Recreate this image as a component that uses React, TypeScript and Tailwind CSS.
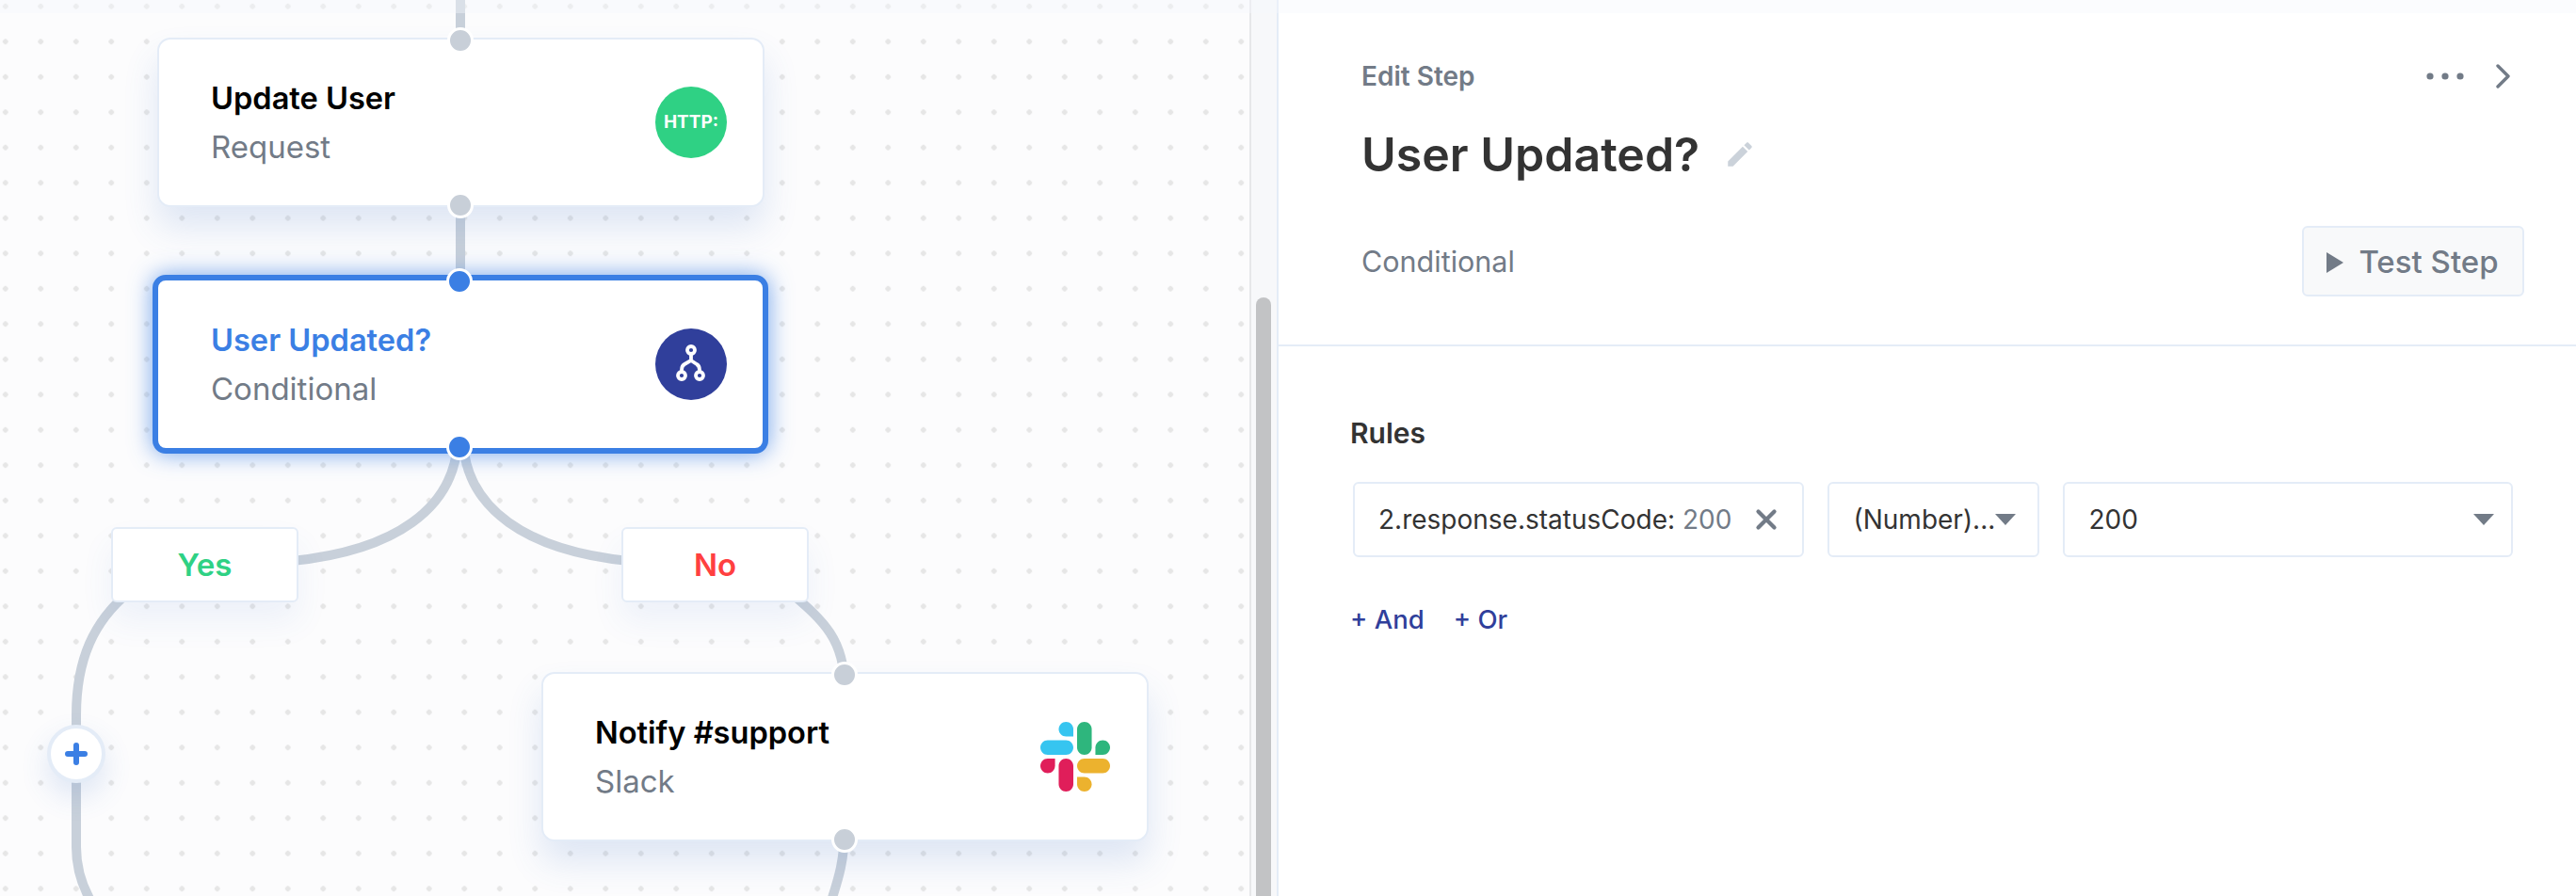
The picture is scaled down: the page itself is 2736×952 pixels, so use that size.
import { X } from "lucide-react";

const sans = "font-['Inter',sans-serif]";

function Port({ className, active }: { className: string; active?: boolean }) {
  return (
    <span
      className={`absolute z-10 ml-[-1px] h-[28px] w-[28px] rounded-full border-[3px] border-white ${
        active ? "bg-[#3b7fe4]" : "bg-[#c8cfd8]"
      } ${className}`}
    />
  );
}

function ConditionalIcon() {
  return (
    <svg viewBox="0 0 40 44" className="h-[44px] w-[40px]" fill="none" stroke="#fff" strokeWidth="3.8" strokeLinecap="round">
      <circle cx="20" cy="7" r="4" />
      <circle cx="10" cy="34" r="4" />
      <circle cx="29" cy="34" r="4" />
      <path d="M20 11v7l-7 4c-2 1.2-3 3-3 6M20 18l6 4c2 1.2 3 3 3 6" />
    </svg>
  );
}

function SlackLogo() {
  return (
    <svg viewBox="0 0 122.8 122.8" className="h-[74px] w-[74px]">
      <path d="M25.8 77.6c0 7.1-5.8 12.9-12.9 12.9S0 84.7 0 77.6s5.8-12.9 12.9-12.9h12.9v12.9z" fill="#E01E5A" />
      <path d="M32.3 77.6c0-7.1 5.8-12.9 12.9-12.9s12.9 5.8 12.9 12.9v32.3c0 7.1-5.8 12.9-12.9 12.9s-12.9-5.8-12.9-12.9V77.6z" fill="#E01E5A" />
      <path d="M45.2 25.8c-7.1 0-12.9-5.8-12.9-12.9S38.1 0 45.2 0s12.9 5.8 12.9 12.9v12.9H45.2z" fill="#36C5F0" />
      <path d="M45.2 32.3c7.1 0 12.9 5.8 12.9 12.9s-5.8 12.9-12.9 12.9H12.9C5.8 58.1 0 52.3 0 45.2s5.8-12.9 12.9-12.9h32.3z" fill="#36C5F0" />
      <path d="M97 45.2c0-7.1 5.8-12.9 12.9-12.9s12.9 5.8 12.9 12.9-5.8 12.9-12.9 12.9H97V45.2z" fill="#2EB67D" />
      <path d="M90.5 45.2c0 7.1-5.8 12.9-12.9 12.9s-12.9-5.8-12.9-12.9V12.9C64.7 5.8 70.5 0 77.6 0s12.9 5.8 12.9 12.9v32.3z" fill="#2EB67D" />
      <path d="M77.6 97c7.1 0 12.9 5.8 12.9 12.9s-5.8 12.9-12.9 12.9-12.9-5.8-12.9-12.9V97h12.9z" fill="#ECB22E" />
      <path d="M77.6 90.5c-7.1 0-12.9-5.8-12.9-12.9s5.8-12.9 12.9-12.9h32.3c7.1 0 12.9 5.8 12.9 12.9s-5.8 12.9-12.9 12.9H77.6z" fill="#ECB22E" />
    </svg>
  );
}

function StepCard({
  title,
  subtitle,
  icon,
  selected,
  className,
}: {
  title: string;
  subtitle: string;
  icon: React.ReactNode;
  selected?: boolean;
  className: string;
}) {
  return (
    <div
      className={`absolute flex items-center justify-between rounded-[14px] bg-white ${
        selected
          ? "h-[190px] w-[654px] border-[6px] border-[#3b7fe4] pl-[56px] pr-[38px] shadow-[0_0_24px_rgba(59,127,228,0.7)]"
          : "h-[180px] w-[645px] border-2 border-[#e4ecf7] pl-[55px] pr-[38px] shadow-[0_22px_36px_rgba(70,120,200,0.16)]"
      } ${className}`}
    >
      <Port active={selected} className="left-1/2 top-[-13px] -translate-x-1/2" />
      <div className="flex flex-col gap-[15px] pt-[1px]">
        <div className={`text-[32.6px] leading-[37px] font-semibold ${selected ? "text-[#3b7fe4]" : "text-black"}`}>{title}</div>
        <div className="text-[33px] leading-[37px] text-[#727b87]">{subtitle}</div>
      </div>
      <div className="flex h-[76px] w-[76px] items-center justify-center">{icon}</div>
      <Port active={selected} className={`left-1/2 -translate-x-1/2 ${selected ? "bottom-[-13px]" : "bottom-[-14px]"}`} />
    </div>
  );
}

function BranchLabel({ text, className }: { text: string; className: string }) {
  return (
    <div
      className={`absolute flex h-[80px] w-[199px] items-center justify-center rounded-[6px] border-2 border-[#e4ecf7] bg-white pt-[2px] text-[33px] font-semibold shadow-[0_20px_34px_rgba(70,120,200,0.08)] ${className}`}
    >
      {text}
    </div>
  );
}

function Caret() {
  return <span className="h-0 w-0 border-x-[11px] border-t-[12px] border-x-transparent border-t-[#727b87]" />;
}

export default function App() {
  return (
    <div className={`relative flex h-[952px] w-[2736px] overflow-hidden bg-white ${sans}`}>
      {/* faint shadow from the header that sits above this crop */}
      <div className="pointer-events-none absolute inset-x-0 top-0 z-20 h-[14px] bg-[#f5f8fc]/40" />

      {/* flow canvas */}
      <div className="relative h-full w-[1327px] flex-none overflow-hidden bg-[#fcfcfd] bg-[radial-gradient(circle,#e6e6e6_2.5px,transparent_3px)] bg-[length:37.5px_37.5px] bg-[position:-13px_-12px]">
        <svg className="absolute inset-0" width="1327" height="952" fill="none" stroke="#c8d0da" strokeWidth="10">
          <path d="M489 0V60M489 200V310" />
          <path d="M486 470C482 540 420 585 310 596" />
          <path d="M492 470C496 540 558 585 668 596" />
          <path d="M136 630C100 660 81 700 81 760V900C81 920 86 940 98 960" />
          <path d="M840 630C875 660 897 680 897 730" />
          <path d="M897 880C897 915 890 935 882 960" />
        </svg>

        <StepCard
          className="left-[167px] top-[40px]"
          title="Update User"
          subtitle="Request"
          icon={
            <div className="flex h-[76px] w-[76px] items-center justify-center rounded-full bg-[#2fd184] text-[19px] font-bold text-white">
              HTTP:
            </div>
          }
        />
        <StepCard
          selected
          className="left-[162px] top-[292px]"
          title="User Updated?"
          subtitle="Conditional"
          icon={
            <div className="flex h-[76px] w-[76px] items-center justify-center rounded-full bg-[#303f9b]">
              <ConditionalIcon />
            </div>
          }
        />
        <BranchLabel text="Yes" className="left-[118px] top-[560px] text-[#2fd184]" />
        <BranchLabel text="No" className="left-[660px] top-[560px] text-[#ff4040]" />
        <StepCard
          className="left-[575px] top-[714px]"
          title="Notify #support"
          subtitle="Slack"
          icon={<SlackLogo />}
        />

        <div className="absolute left-[50px] top-[770px] flex h-[62px] w-[62px] items-center justify-center rounded-full border-4 border-[#e4ecf7] bg-white shadow-[0_14px_30px_rgba(70,120,200,0.16)]">
          <svg viewBox="0 0 24 24" className="h-[24px] w-[24px]" stroke="#3b7fe4" strokeWidth="6" strokeLinecap="round">
            <path d="M12 3v18M3 12h18" />
          </svg>
        </div>
      </div>

      {/* scrollbar */}
      <div className="flex h-full w-[31px] flex-none flex-col justify-end border-x-2 border-l-[#e6e7e9] border-r-[#e4ecf7] bg-[#f7f8fa] pl-[5px] pr-[5px]">
        <div className="h-[636px] w-[16px] rounded-t-full bg-[#c2c3c5]" />
      </div>

      {/* edit panel */}
      <div className="flex min-w-0 flex-1 flex-col">
        <div className="h-[368px] border-b-2 border-[#e4ecf7] pl-[88px] pr-[55px]">
          <div className="flex items-center justify-between pt-[66px]">
            <span className="text-[28px] leading-[30px] font-semibold text-[#727b87]">Edit Step</span>
            <div className="flex items-center gap-[34px] pr-[14px]">
              <svg viewBox="0 0 40 8" className="h-[8px] w-[40px]" fill="#727b87">
                <circle cx="4" cy="4" r="3.6" />
                <circle cx="20" cy="4" r="3.6" />
                <circle cx="36" cy="4" r="3.6" />
              </svg>
              <svg viewBox="0 0 16 26" className="h-[26px] w-[16px]" fill="none" stroke="#727b87" strokeWidth="3.4" strokeLinecap="round" strokeLinejoin="round">
                <path d="M2 2l11 11L2 24" />
              </svg>
            </div>
          </div>
          <div className="mt-[38px] flex items-center gap-[26px]">
            <h1 className="text-[50px] leading-[60px] font-semibold text-[#333]">User Updated?</h1>
            <svg viewBox="0 0 24 24" className="h-[34px] w-[34px]" fill="#cbd2da">
              <path d="M3 17.25V21h3.75L17.81 9.94l-3.75-3.75L3 17.25zM20.71 7.04c.39-.39.39-1.02 0-1.41l-2.34-2.34c-.39-.39-1.02-.39-1.41 0l-1.83 1.83 3.75 3.75 1.83-1.83z" />
            </svg>
          </div>
          <div className="mt-[46px] flex items-center justify-between">
            <span className="text-[30.5px] leading-[36px] text-[#727b87]">Conditional</span>
            <button className="flex h-[75px] w-[236px] items-center justify-center gap-[15px] rounded-[6px] border-2 border-[#e4ecf7] bg-[#f8f9fa] pr-[2px] pt-[2px] text-[33px] font-medium text-[#727b87]">
              <svg viewBox="0 0 20 24" className="h-[24px] w-[20px]" fill="#727b87">
                <path d="M1 1l18 11L1 23z" />
              </svg>
              Test Step
            </button>
          </div>
        </div>

        <div className="pl-[76px] pr-[67px] pt-[74px]">
          <h2 className="text-[30px] leading-[36px] font-semibold text-[#333]">Rules</h2>
          <div className="mt-[34px] flex gap-[25px] pl-[3px]">
            <div className="flex h-[80px] w-[479px] items-center justify-between rounded-[6px] border-2 border-[#e4ecf7] pl-[25px] pr-[21px] text-[28px] text-[#333]">
              <span>
                2.response.statusCode: <span className="text-[#727b87]">200</span>
              </span>
              <X className="h-[34px] w-[34px] text-[#727b87]" strokeWidth={3} />
            </div>
            <div className="flex h-[80px] w-[225px] items-center justify-between rounded-[6px] border-2 border-[#e4ecf7] pl-[26px] pr-[23px] text-[28px] text-[#333]">
              <span>(Number)...</span>
              <Caret />
            </div>
            <div className="flex h-[80px] w-[479px] items-center justify-between rounded-[6px] border-2 border-[#e4ecf7] pl-[26px] pr-[18px] text-[28px] text-[#333]">
              <span>200</span>
              <Caret />
            </div>
          </div>
          <div className="mt-[50px] flex gap-[31px] text-[27.5px] leading-[32px] font-medium text-[#303f9b]">
            <span>+ And</span>
            <span>+ Or</span>
          </div>
        </div>
      </div>
    </div>
  );
}
